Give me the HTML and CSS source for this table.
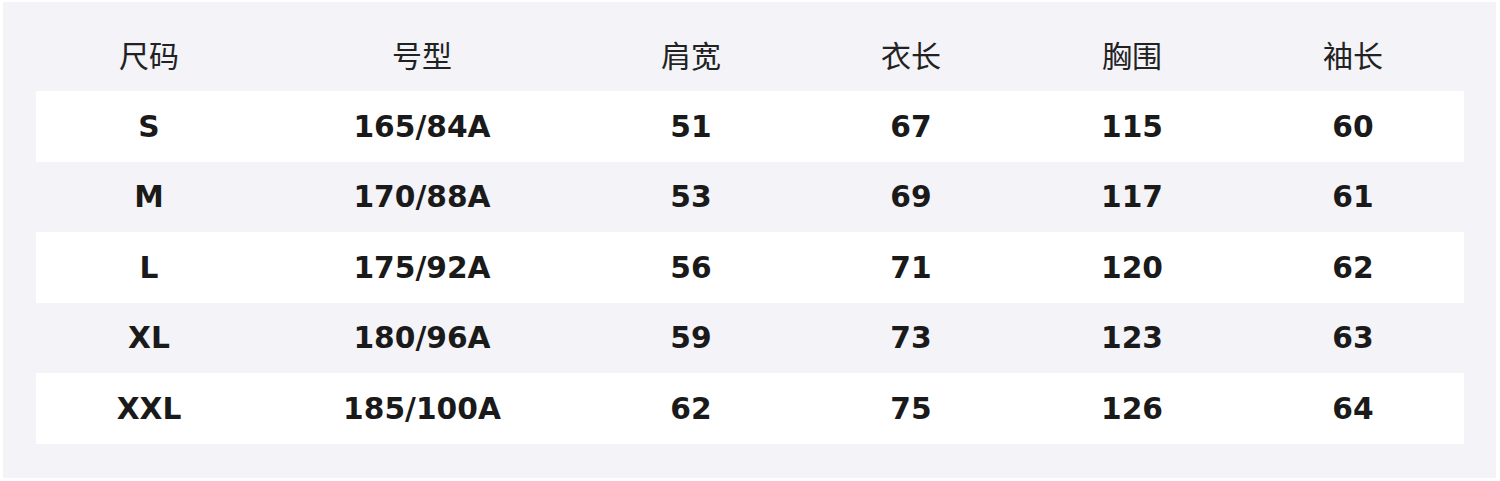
FILE: index.html
```html
<!DOCTYPE html>
<html lang="zh">
<head>
<meta charset="utf-8">
<link rel="stylesheet" href="styles.css">
</head>
<body>
<div class="panel">
  <table class="size-table">
    <colgroup>
      <col class="c1"><col class="c2"><col class="c3"><col class="c4"><col class="c5"><col class="c6">
    </colgroup>
    <thead>
      <tr><th>尺码</th><th>号型</th><th>肩宽</th><th>衣长</th><th>胸围</th><th>袖长</th></tr>
    </thead>
    <tbody>
      <tr class="odd"><td>S</td><td>165/84A</td><td>51</td><td>67</td><td>115</td><td>60</td></tr>
      <tr><td>M</td><td>170/88A</td><td>53</td><td>69</td><td>117</td><td>61</td></tr>
      <tr class="odd"><td>L</td><td>175/92A</td><td>56</td><td>71</td><td>120</td><td>62</td></tr>
      <tr><td>XL</td><td>180/96A</td><td>59</td><td>73</td><td>123</td><td>63</td></tr>
      <tr class="odd"><td>XXL</td><td>185/100A</td><td>62</td><td>75</td><td>126</td><td>64</td></tr>
    </tbody>
  </table>
</div>
</body>
</html>
```
FILE: styles.css
```css
html, body {
  margin: 0;
  padding: 0;
  background: #ffffff;
}
body {
  padding: 2px 4px 3px 3px;
}
.panel {
  background: #f3f3f8;
  height: 476px;
  box-sizing: border-box;
  padding: 18px 32px 0 33px;
}
.size-table {
  width: 1428px;
  table-layout: fixed;
  border-collapse: collapse;
  border-spacing: 0;
}
.c1 { width: 226px; }
.c2 { width: 320px; }
.c3 { width: 218px; }
.c4 { width: 222px; }
.c5 { width: 220px; }
.c6 { width: 222px; }
.size-table th {
  height: 67px;
  padding: 0 0 4px 0;
  text-align: center;
  font-family: "Noto Sans CJK SC", "DejaVu Sans", sans-serif;
  font-weight: 400;
  font-size: 30px;
  color: #222222;
}
.size-table td {
  height: 70.5px;
  padding: 0;
  text-align: center;
  font-family: "DejaVu Sans", sans-serif;
  font-weight: 700;
  font-size: 29.7px;
  color: #1a1a1a;
}
.size-table tr.odd td {
  background: #ffffff;
}
```
